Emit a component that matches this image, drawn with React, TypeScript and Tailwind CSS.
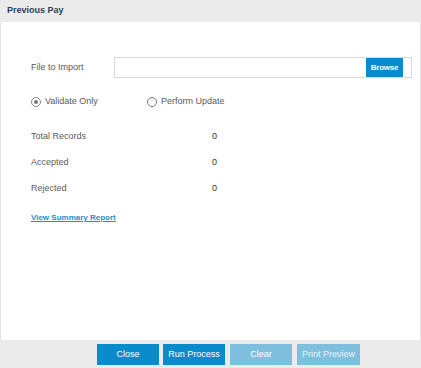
export default function App() {
  const stats = [
    { label: "Total Records", value: 0 },
    { label: "Accepted", value: 0 },
    { label: "Rejected", value: 0 },
  ];

  return (
    <div
      className="w-[421px] h-screen flex flex-col bg-white text-[9px] text-[#5a5a5a]"
      style={{ fontFamily: '"Liberation Sans", Arial, sans-serif' }}
    >
      <header className="h-[22px] shrink-0 bg-[#ebebeb] pl-[7px] flex items-center font-bold text-[#2b3f5e]">
        Previous Pay
      </header>

      <main className="flex-1 border-l border-r border-[#e3e3e3] pl-[30px] pt-[35px]">
        <div className="flex items-center h-[21px]">
          <label className="w-[83px]">File to Import</label>
          <div className="w-[298px] h-[21px] border border-[#d9d9d9] flex items-center justify-end">
            <button className="h-[19px] w-[37px] mr-[8px] bg-[#0a8bcb] text-white text-[8px] font-bold tracking-tight">
              Browse
            </button>
          </div>
        </div>

        <div className="flex items-center h-[13px] mt-[17px]">
          <label className="flex items-center w-[116px]">
            <span className="w-[10px] h-[10px] rounded-full border border-[#888] flex items-center justify-center">
              <span className="w-[4px] h-[4px] rounded-full bg-[#777]" />
            </span>
            <span className="ml-[4px]">Validate Only</span>
          </label>
          <label className="flex items-center">
            <span className="w-[10px] h-[10px] rounded-full border border-[#777]" />
            <span className="ml-[4px]">Perform Update</span>
          </label>
        </div>

        <div className="mt-[22px] flex flex-col gap-[13px]">
          {stats.map((s) => (
            <div key={s.label} className="flex items-center h-[13px]">
              <span className="w-[181px]">{s.label}</span>
              <span className="text-[#333]">{s.value}</span>
            </div>
          ))}
        </div>

        <a className="block mt-[17px] text-[8px] font-bold text-[#1c8fcf] underline w-max">
          View Summary Report
        </a>
      </main>

      <footer className="h-[28px] shrink-0 bg-[#ebebeb] flex items-start pt-[4px] pl-[97px] gap-[4px]">
        <button className="w-[62px] h-[21px] bg-[#0a8bcb] text-white">Close</button>
        <button className="w-[62px] h-[21px] bg-[#0a8bcb] text-white">Run Process</button>
        <button className="w-[62px] h-[21px] bg-[#7dbfdd] text-white ml-[1px]">Clear</button>
        <button className="w-[63px] h-[21px] bg-[#7dbfdd] text-[#e8f4fa] ml-[1px]">Print Preview</button>
      </footer>
    </div>
  );
}
